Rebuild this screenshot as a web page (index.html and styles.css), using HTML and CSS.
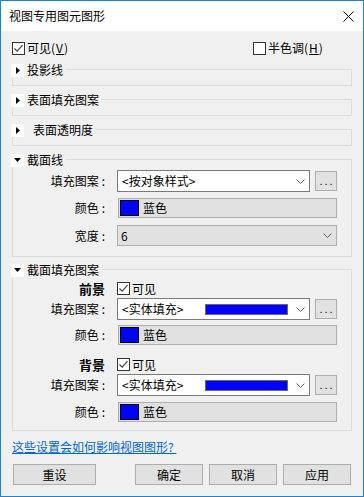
FILE: index.html
```html
<!DOCTYPE html>
<html>
<head>
<meta charset="utf-8">
<link rel="stylesheet" href="styles.css">
</head>
<body>
<div class="window">
  <div class="titlebar">
    <span class="title">视图专用图元图形</span>
    <svg class="close" width="11" height="11" viewBox="0 0 11 11"><path d="M0.5 0.5L10.5 10.5M10.5 0.5L0.5 10.5" stroke="#000" stroke-width="1"/></svg>
  </div>
  <div class="content">
    <div class="toprow">
      <div class="check"><span class="box"><svg width="11" height="11" viewBox="0 0 11 11"><path d="M1.5 5.5L4.2 8.2L9.5 2.2" fill="none" stroke="#444" stroke-width="1.2"/></svg></span><span>可见<span class="acc">(<u>V</u>)</span></span></div>
      <div class="check"><span class="box"></span><span>半色调<span class="acc">(<u>H</u>)</span></span></div>
    </div>

    <div class="group g-first">
      <div class="legend"><span class="toggle"><svg width="4" height="7" viewBox="0 0 4 7"><path d="M0 0L4 3.5L0 7Z" fill="#000"/></svg></span><span>投影线</span></div>
    </div>

    <div class="group g-next">
      <div class="legend"><span class="toggle"><svg width="4" height="7" viewBox="0 0 4 7"><path d="M0 0L4 3.5L0 7Z" fill="#000"/></svg></span><span>表面填充图案</span></div>
    </div>

    <div class="group g-next">
      <div class="legend"><span class="toggle"><svg width="4" height="7" viewBox="0 0 4 7"><path d="M0 0L4 3.5L0 7Z" fill="#000"/></svg></span><span class="indent">表面透明度</span></div>
    </div>

    <div class="group g-next g-cut">
      <div class="legend"><span class="toggle"><svg width="7" height="4" viewBox="0 0 7 4"><path d="M0 0L7 0L3.5 4Z" fill="#000"/></svg></span><span>截面线</span></div>
      <div class="row r-first">
        <span class="lbl">填充图案<span class="colon">:</span></span>
        <div class="select"><span class="txt">&lt;按对象样式&gt;</span><svg class="chev" width="9" height="5" viewBox="0 0 9 5"><path d="M0.5 0.5L4.5 4.5L8.5 0.5" fill="none" stroke="#606060"/></svg></div>
        <span class="more">...</span>
      </div>
      <div class="row r-gap6">
        <span class="lbl">颜色<span class="colon">:</span></span>
        <div class="field"><span class="swatch"></span>蓝色</div>
      </div>
      <div class="row r-gap7">
        <span class="lbl">宽度<span class="colon">:</span></span>
        <div class="wfield"><span class="txt">6</span><svg class="chev" width="9" height="5" viewBox="0 0 9 5"><path d="M0.5 0.5L4.5 4.5L8.5 0.5" fill="none" stroke="#606060"/></svg></div>
      </div>
    </div>

    <div class="group g-fill">
      <div class="legend"><span class="toggle"><svg width="7" height="4" viewBox="0 0 7 4"><path d="M0 0L7 0L3.5 4Z" fill="#000"/></svg></span><span>截面填充图案</span></div>
      <div class="row r-fg">
        <span class="lbl bold">前景</span>
        <div class="check"><span class="box"><svg width="11" height="11" viewBox="0 0 11 11"><path d="M1.5 5.5L4.2 8.2L9.5 2.2" fill="none" stroke="#444" stroke-width="1.2"/></svg></span><span>可见</span></div>
      </div>
      <div class="row r-gap3">
        <span class="lbl">填充图案<span class="colon">:</span></span>
        <div class="select"><span class="txt">&lt;实体填充&gt;</span><span class="bar"></span><svg class="chev" width="9" height="5" viewBox="0 0 9 5"><path d="M0.5 0.5L4.5 4.5L8.5 0.5" fill="none" stroke="#606060"/></svg></div>
        <span class="more">...</span>
      </div>
      <div class="row r-gap5">
        <span class="lbl">颜色<span class="colon">:</span></span>
        <div class="field"><span class="swatch"></span>蓝色</div>
      </div>
      <div class="row r-bg">
        <span class="lbl bold">背景</span>
        <div class="check"><span class="box"><svg width="11" height="11" viewBox="0 0 11 11"><path d="M1.5 5.5L4.2 8.2L9.5 2.2" fill="none" stroke="#444" stroke-width="1.2"/></svg></span><span>可见</span></div>
      </div>
      <div class="row r-gap3">
        <span class="lbl">填充图案<span class="colon">:</span></span>
        <div class="select"><span class="txt">&lt;实体填充&gt;</span><span class="bar"></span><svg class="chev" width="9" height="5" viewBox="0 0 9 5"><path d="M0.5 0.5L4.5 4.5L8.5 0.5" fill="none" stroke="#606060"/></svg></div>
        <span class="more">...</span>
      </div>
      <div class="row r-gap6">
        <span class="lbl">颜色<span class="colon">:</span></span>
        <div class="field"><span class="swatch"></span>蓝色</div>
      </div>
    </div>

    <a class="link" href="#">这些设置会如何影响视图图形?&nbsp;</a>

    <div class="buttons">
      <span class="btn btn-wide">重设</span>
      <span class="btn btn-ok">确定</span>
      <span class="btn">取消</span>
      <span class="btn">应用</span>
    </div>
  </div>
</div>
</body>
</html>
```

FILE: styles.css
```css
* { box-sizing: border-box; }
html, body { margin: 0; padding: 0; }
body {
  font-family: "Noto Sans CJK SC", "Noto Sans", sans-serif;
  font-size: 12px;
  color: #000;
  background: #f0f0f0;
}
.window {
  width: 364px;
  height: 497px;
  border: 1px solid #1883d7;
  background: #f0f0f0;
  display: flex;
  flex-direction: column;
}
.titlebar {
  height: 30px;
  background: #fff;
  display: flex;
  align-items: center;
  padding: 0 9px 0 8px;
  flex-shrink: 0;
}
.title { flex: 1; line-height: 14px; }
.close { display: block; }
.content {
  padding: 10px 11px 0 11px;
  display: flex;
  flex-direction: column;
}
.toprow {
  display: grid;
  grid-template-columns: 241px auto;
  align-items: center;
  height: 14px;
}
.check {
  display: flex;
  align-items: center;
  line-height: 14px;
}
.acc { letter-spacing: 1px; }
.box {
  width: 13px;
  height: 13px;
  border: 1px solid #333;
  background: #fff;
  margin-right: 2px;
  display: flex;
  align-items: center;
  justify-content: center;
  flex-shrink: 0;
}
.box svg { display: block; }
u { text-decoration: underline; }

.group {
  border: 1px solid #dcdcdc;
  padding: 0 14px 8px 0;
}
.g-first { margin-top: 14px; }
.g-next { margin-top: 13px; }
.g-cut { padding-bottom: 10px; }
.g-fill { margin-top: 12px; padding-bottom: 8px; }
.legend {
  display: flex;
  align-items: center;
  width: max-content;
  height: 14px;
  line-height: 14px;
  margin: -7px 0 0 -2px;
  background: #f0f0f0;
  padding-right: 3px;
}
.toggle {
  width: 13px;
  height: 13px;
  background: #fff;
  display: flex;
  align-items: center;
  justify-content: center;
  margin-right: 3px;
}
.toggle svg { display: block; }
.indent { padding-left: 6px; }

.row {
  display: flex;
  align-items: center;
}
.r-first { margin-top: 3px; }
.r-gap3 { margin-top: 3px; }
.r-gap5 { margin-top: 5px; }
.r-gap6 { margin-top: 6px; }
.r-gap7 { margin-top: 7px; }
.r-fg { margin-top: 5px; height: 13px; }
.r-bg { margin-top: 13px; height: 13px; }
.lbl {
  width: 92px;
  margin-right: 12px;
  text-align: right;
  line-height: 14px;
  flex-shrink: 0;
}
.colon { margin-left: 3px; }
.bold { font-weight: bold; font-size: 13px; }
.select {
  width: 194px;
  height: 22px;
  background: #fff;
  border: 1px solid #7a7a7a;
  display: flex;
  align-items: center;
  padding: 0 4px 0 4px;
}
.select .txt { flex: 1; line-height: 14px; }
.chev { display: block; flex-shrink: 0; }
.bar {
  width: 83px;
  height: 11px;
  background: #0000ff;
  border: 1px solid #6a6a6a;
  margin-right: 8px;
}
.more {
  width: 22px;
  height: 20px;
  margin-left: 5px;
  border: 1px solid #adadad;
  background: #e1e1e1;
  display: flex;
  align-items: center;
  justify-content: center;
  letter-spacing: 2px;
  padding-left: 2px;
  line-height: 12px;
  font-family: "Liberation Sans", sans-serif;
  font-size: 11px;
}
.field {
  width: 220px;
  height: 20px;
  margin-left: 1px;
  border: 1px solid #adadad;
  background: #e1e1e1;
  display: flex;
  align-items: center;
  padding-left: 1px;
  line-height: 14px;
}
.swatch {
  width: 19px;
  height: 16px;
  background: #0000ff;
  border: 1px solid #000;
  margin-right: 4px;
}
.wfield {
  width: 221px;
  height: 21px;
  border: 1px solid #adadad;
  background: #e1e1e1;
  display: flex;
  align-items: center;
  padding: 0 4px 0 3px;
}
.wfield .txt { flex: 1; line-height: 14px; }

.link {
  margin-top: 8px;
  color: #0066cc;
  text-decoration: underline;
  line-height: 16px;
  width: max-content;
}
.buttons {
  display: flex;
  margin-top: 9px;
  padding: 0 1px;
  gap: 6px;
}
.btn {
  width: 68px;
  height: 21px;
  background: #e1e1e1;
  border: 1px solid #adadad;
  display: flex;
  align-items: center;
  justify-content: center;
  line-height: 14px;
}
.btn-wide { width: 83px; }
.btn-ok { margin-left: auto; }
```
